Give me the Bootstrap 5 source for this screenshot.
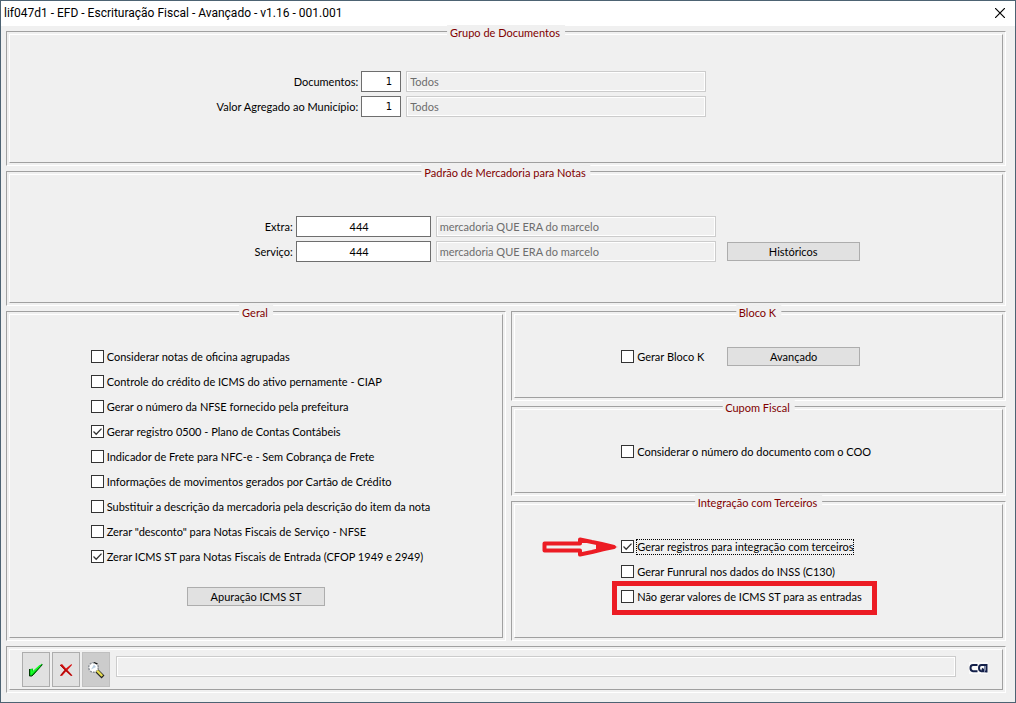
<!DOCTYPE html>
<html lang="pt-BR">
<head>
<meta charset="utf-8">
<meta name="viewport" content="width=device-width, initial-scale=1">
<title>lif047d1 - EFD - Escrituração Fiscal</title>
<link href="https://cdn.jsdelivr.net/npm/bootstrap@5.3.0/dist/css/bootstrap.min.css" rel="stylesheet">
<style>
  body { font: 11px/15px Lato, "Liberation Sans", sans-serif; color: #000; background: #f0f0f0; }
  .app-window { border: 1px solid #4d6373; }
  .title-bar { height: 25px; background: #fff; font: 12px/24px Roboto, sans-serif; padding-left: 3px; }
  .title-bar h1 { font: inherit; }
  .btn-x { border: 0; background: none; width: 30px; height: 24px; display: flex; align-items: center; justify-content: center; }
  .workspace { padding: 5px 9px 9px 5px; gap: 5px; }
  .lower { display: grid; grid-template-columns: 500fr 495fr; gap: 5px; }
  .stack { gap: 5px; }

  /* double etched frame */
  .frame { position: relative; border: 1px solid; border-color: #a0a0a0 #fff #fff #a0a0a0; padding: 2px; margin: 0; display: flex; flex-direction: column; }
  .frame-in { border: 1px solid; border-color: #fff #a0a0a0 #a0a0a0 #fff; flex: 1 0 auto; padding: 29px 0 28px; }
  .frame-in.docs { padding: 34px 0 43px; }
  .frame-in.goods { padding: 39px 0 38px; }
  .frame-in.tools { padding: 2px 14px 2px 12px; }
  .frame legend { position: absolute; top: -7px; left: 50%; width: auto; margin: 0; padding: 0 5px 0 3px; font-size: 11px; line-height: 15px; color: #800000; background: #f0f0f0; white-space: nowrap; }

  .line { display: flex; align-items: center; height: 25px; }
  .docs .line > label { width: 35.4%; text-align: right; padding-right: 3px; }
  .goods .line > label { width: 28.8%; text-align: right; padding-right: 3px; }
  .field { height: 21px; border: 1px solid #6e6e6e; border-radius: 0; background: #fff; color: #000; padding: 0 8px 0 0; min-width: 0; outline: 0; }
  .field.code { width: 40px; text-align: right; font-family: "DejaVu Sans", sans-serif; font-size: 10px; }
  .field.item { width: 135px; text-align: center; }
  .field-off { height: 21px; border: 1px solid #ccc; box-shadow: inset 0 0 0 1px #fff; border-radius: 0; background: #f0f0f0; color: #6d6d6d; padding: 0 0 1px 3px; margin-left: 5px; width: 300px; min-width: 0; }
  .goods .field-off { width: 280px; }
  .btn-flat { height: 19px; width: 133px; padding: 0; border: 1px solid #adadad; border-radius: 0; background: #e1e1e1; color: #000; font-size: 11px; line-height: 17px; }
  .btn-flat.wide { width: 138px; margin: 18px auto 0; display: block; }
  .goods .btn-flat { margin-left: 11px; }

  .checks { padding-left: 16.4%; }
  .checks.right { padding-left: 21.8%; }
  .checks input { appearance: none; flex: none; width: 13px; height: 13px; margin: 0 3px 0 0; border: 1px solid #333; border-radius: 0; background: #fff center/11px 11px no-repeat; }
  .checks input:checked { background-image: url("data:image/svg+xml,%3Csvg xmlns='http://www.w3.org/2000/svg' viewBox='0 0 11 11'%3E%3Cpath d='M1.5 5.5l2.7 2.7 5.3-5.6' fill='none' stroke='%23333' stroke-width='1.3'/%3E%3C/svg%3E"); }
  .checks label { white-space: nowrap; }
  .focus-dots { outline: 1px dotted #000; line-height: 14px; }
  .col-k { width: 106px; }
  .marked { position: relative; }
  .red-box { position: absolute; left: -9px; top: -3px; width: 265px; height: 34px; border: 5px solid #ec1c24; pointer-events: none; }
  .red-arrow { position: absolute; right: 100%; top: 3px; margin-right: 3px; }

  .tool { width: 28px; height: 35px; padding: 0; border: 1px solid #adadad; border-radius: 0; background: #e1e1e1; display: flex; align-items: center; justify-content: center; }
  .tool.off { background: #ccc; border-color: #bfbfbf; }
  .status { flex: 1 1 auto; margin: 4px 13px 0 6px; }
</style>
</head>
<body>
<main class="app-window min-vh-100">
  <header class="title-bar d-flex justify-content-between">
    <h1 class="m-0">lif047d1 - EFD - Escrituração Fiscal - Avançado - v1.16 - 001.001</h1>
    <button class="btn-x p-0" type="button" aria-label="Fechar"><svg width="10" height="10" viewBox="0 0 10 10"><path d="M0 0l10 10M10 0L0 10" stroke="#000" stroke-width="1.2"/></svg></button>
  </header>

  <form class="workspace d-flex flex-column">
    <fieldset class="frame">
      <legend class="translate-middle-x">Grupo de Documentos</legend>
      <div class="frame-in docs">
        <div class="line"><label for="doc">Documentos:</label><input class="field code" id="doc" type="text" value="1"><input class="field-off" type="text" value="Todos" disabled aria-label="Descrição dos documentos"></div>
        <div class="line"><label for="vam">Valor Agregado ao Município:</label><input class="field code" id="vam" type="text" value="1"><input class="field-off" type="text" value="Todos" disabled aria-label="Descrição do valor agregado"></div>
      </div>
    </fieldset>

    <fieldset class="frame">
      <legend class="translate-middle-x">Padrão de Mercadoria para Notas</legend>
      <div class="frame-in goods">
        <div class="line"><label for="extra">Extra:</label><input class="field item" id="extra" type="text" value="444"><input class="field-off" type="text" value="mercadoria QUE ERA do marcelo" disabled aria-label="Mercadoria extra"></div>
        <div class="line"><label for="serv">Serviço:</label><input class="field item" id="serv" type="text" value="444"><input class="field-off" type="text" value="mercadoria QUE ERA do marcelo" disabled aria-label="Mercadoria serviço"><button class="btn btn-flat" type="button">Históricos</button></div>
      </div>
    </fieldset>

    <div class="lower">
      <fieldset class="frame">
        <legend class="translate-middle-x">Geral</legend>
        <div class="frame-in">
          <div class="checks">
            <div class="line"><input type="checkbox" id="g1"><label for="g1">Considerar notas de oficina agrupadas</label></div>
            <div class="line"><input type="checkbox" id="g2"><label for="g2">Controle do crédito de ICMS do ativo pernamente - CIAP</label></div>
            <div class="line"><input type="checkbox" id="g3"><label for="g3">Gerar o número da NFSE fornecido pela prefeitura</label></div>
            <div class="line"><input type="checkbox" id="g4" checked><label for="g4">Gerar registro 0500 - Plano de Contas Contábeis</label></div>
            <div class="line"><input type="checkbox" id="g5"><label for="g5">Indicador de Frete para NFC-e - Sem Cobrança de Frete</label></div>
            <div class="line"><input type="checkbox" id="g6"><label for="g6">Informações de movimentos gerados por Cartão de Crédito</label></div>
            <div class="line"><input type="checkbox" id="g7"><label for="g7">Substituir a descrição da mercadoria pela descrição do item da nota</label></div>
            <div class="line"><input type="checkbox" id="g8"><label for="g8">Zerar "desconto" para Notas Fiscais de Serviço - NFSE</label></div>
            <div class="line"><input type="checkbox" id="g9" checked><label for="g9">Zerar ICMS ST para Notas Fiscais de Entrada (CFOP 1949 e 2949)</label></div>
          </div>
          <button class="btn btn-flat wide" type="button">Apuração ICMS ST</button>
        </div>
      </fieldset>

      <div class="stack d-flex flex-column">
        <fieldset class="frame">
          <legend class="translate-middle-x">Bloco K</legend>
          <div class="frame-in">
            <div class="checks right">
              <div class="line"><div class="col-k d-flex align-items-center"><input type="checkbox" id="k1"><label for="k1">Gerar Bloco K</label></div><button class="btn btn-flat" type="button">Avançado</button></div>
            </div>
          </div>
        </fieldset>
        <fieldset class="frame">
          <legend class="translate-middle-x">Cupom Fiscal</legend>
          <div class="frame-in">
            <div class="checks right">
              <div class="line"><input type="checkbox" id="c1"><label for="c1">Considerar o número do documento com o COO</label></div>
            </div>
          </div>
        </fieldset>
        <fieldset class="frame">
          <legend class="translate-middle-x">Integração com Terceiros</legend>
          <div class="frame-in">
            <div class="checks right">
              <div class="line marked">
                <svg class="red-arrow" width="76" height="20" viewBox="0 0 76 20" aria-hidden="true"><path d="M2.500 6.500H38V2.500L50 5Q61 7 72 10Q61 12 50 15L38 17.500V13.500H2.500Z" fill="#f0f0f0" stroke="#ec1c24" stroke-width="4" stroke-linejoin="round"/><path d="M54 6L76 10L54 14Z" fill="#ec1c24"/></svg>
                <input type="checkbox" id="t1" checked><label class="focus-dots" for="t1">Gerar registros para integração com terceiros</label>
              </div>
              <div class="line"><input type="checkbox" id="t2"><label for="t2">Gerar Funrural nos dados do INSS (C130)</label></div>
              <div class="line marked"><input type="checkbox" id="t3"><label for="t3">Não gerar valores de ICMS ST para as entradas</label><span class="red-box"></span></div>
            </div>
          </div>
        </fieldset>
      </div>
    </div>

    <div class="frame">
      <div class="frame-in tools d-flex align-items-start">
        <div class="d-flex" style="gap:2px">
          <button class="tool" type="button" aria-label="Confirmar"><svg width="16" height="16" viewBox="0 0 16 16"><path d="M2 7L5 6.500V9L14 1.500V3L6 12.500L3.500 14L2 14Z" fill="#0c1" /><path d="M1.500 7V14H4L14.500 2.500" fill="none" stroke="#023a06" stroke-width="1"/><path d="M3.500 7.500V11.500L12 3.500" fill="none" stroke="#1aff2c" stroke-width="1.500"/></svg></button>
          <button class="tool" type="button" aria-label="Cancelar"><svg width="16" height="16" viewBox="0 0 16 16"><path d="M2 3L4 2L8 6.500L13.500 2L14 3L9.500 8L14.500 13.500L13 14L8 9.500L4 14L2 13.500L6.500 8Z" fill="#d81010"/><path d="M2 3L13.500 13.500M2.500 13.500L7 8.500" fill="none" stroke="#8d0000" stroke-width=".8"/></svg></button>
          <button class="tool off" type="button" aria-label="Pesquisar" disabled><svg width="18" height="18" viewBox="0 0 18 18"><circle cx="6.500" cy="6.500" r="4.800" fill="#fff" stroke="#8a8f96" stroke-width="1.400" stroke-dasharray="2 1"/><path d="M4 8.500L7 3.500L9 6Z" fill="#b9cfe2"/><path d="M7 1.500L10.500 3" stroke="#111" stroke-width="1.200"/><path d="M10 10L16 16" stroke="#222" stroke-width="4"/><path d="M10 9.700L15.300 15" stroke="#e6dc50" stroke-width="2.400"/></svg></button>
        </div>
        <input class="field-off status" type="text" disabled aria-label="Mensagem">
        <svg class="mt-2" width="19" height="16" viewBox="0 0 19 16" role="img" aria-label="CQI"><path d="M0 2H19V14H0Z" fill="#fafafa"/><path d="M8.500 5H4Q1.500 5 1.500 8T4 11.200H8.500" fill="none" stroke="#14204a" stroke-width="2"/><path d="M17.500 12.500V5H12.500Q10 5 10 8T12.500 11.200H15.500L13 8.500" fill="none" stroke="#14204a" stroke-width="2"/><path d="M15.500 6V12" stroke="#7b86a8" stroke-width="1"/></svg>
      </div>
    </div>
  </form>
</main>
<script src="https://cdn.jsdelivr.net/npm/bootstrap@5.3.0/dist/js/bootstrap.bundle.min.js"></script>
</body>
</html>
